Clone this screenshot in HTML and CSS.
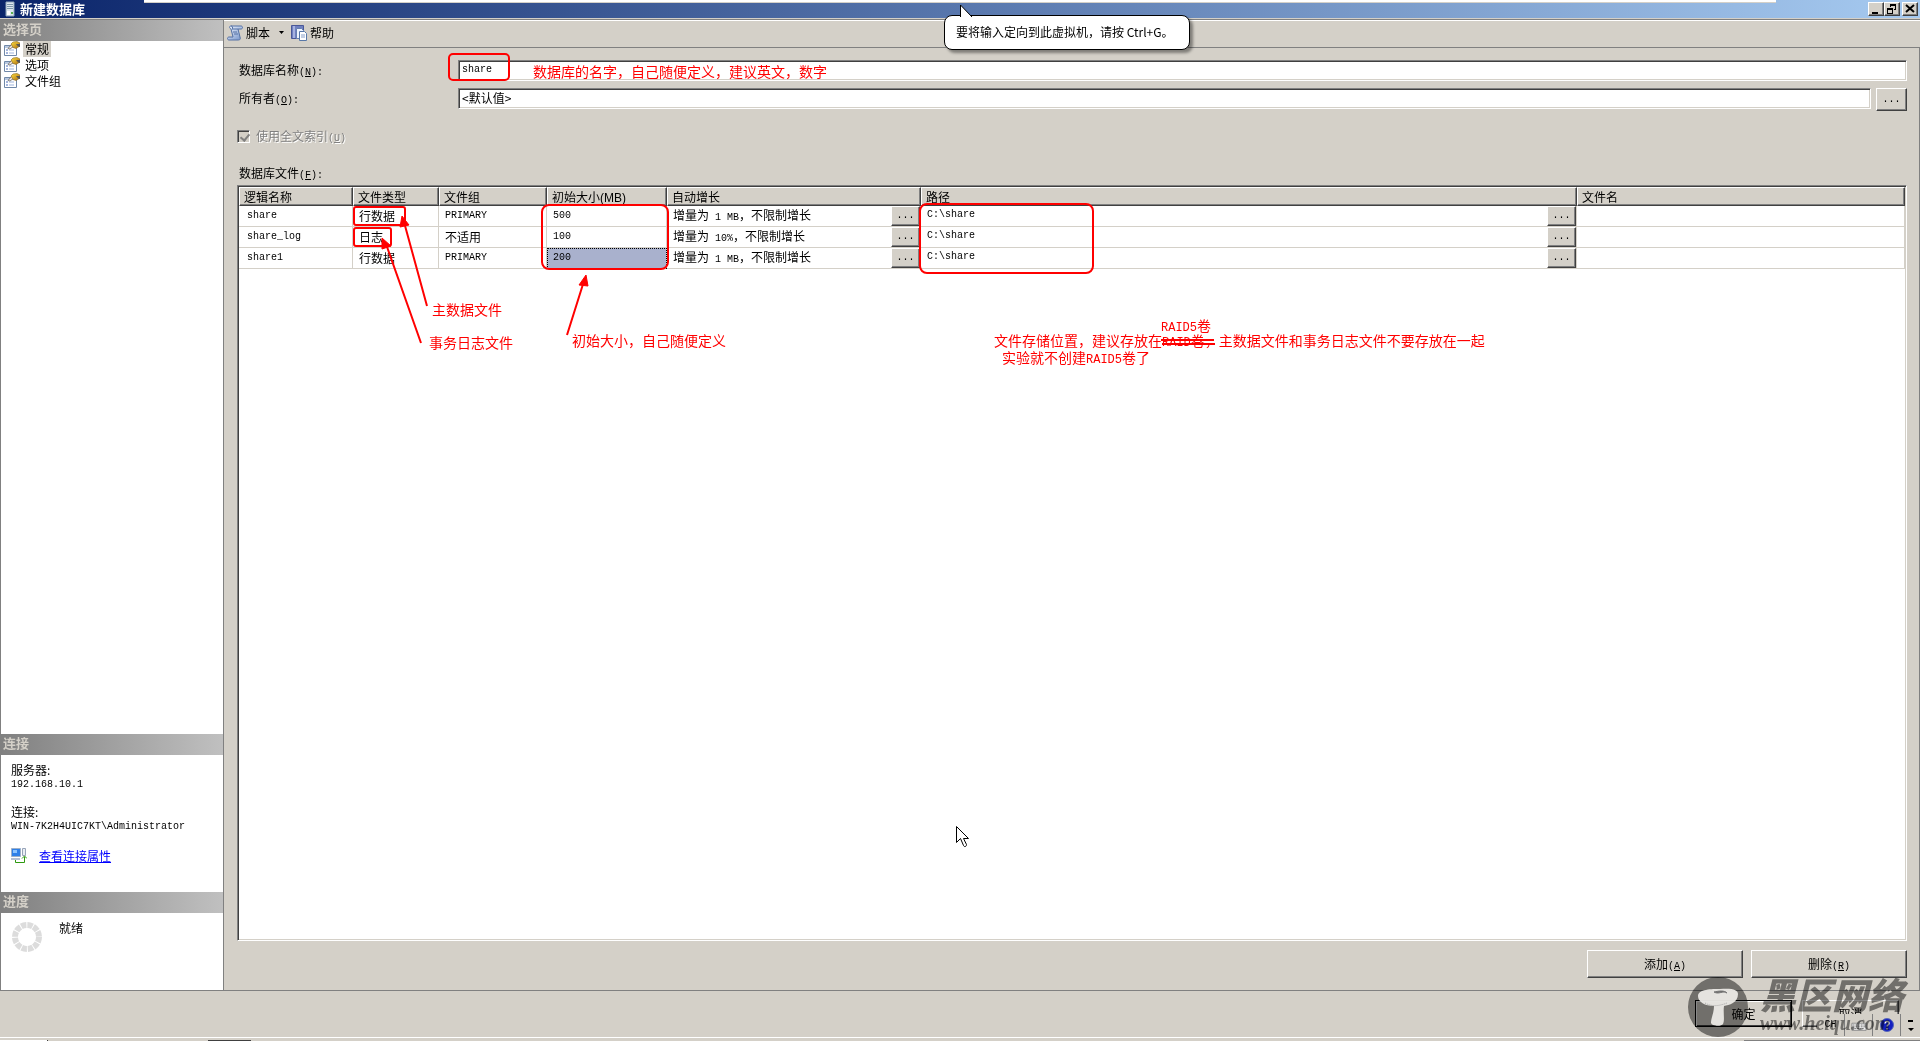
FILE: index.html
```html
<!DOCTYPE html>
<html lang="zh-CN">
<head>
<meta charset="utf-8">
<title>新建数据库</title>
<link rel="stylesheet" href="styles.css">
</head>
<body>
<svg class="defs" aria-hidden="true">
  <defs>
    <linearGradient id="blue" x1="0" y1="0" x2="1" y2="1"><stop offset="0" stop-color="#f4f8ff"/><stop offset="1" stop-color="#6f8fc8"/></linearGradient>
    <linearGradient id="gold" x1="0" y1="0" x2="1" y2="1"><stop offset="0" stop-color="#ffe040"/><stop offset="1" stop-color="#a86a10"/></linearGradient>
    <symbol id="page-icon" viewBox="0 0 16 16">
      <path d="M.5 4.500h12v10H.5z" fill="#fff" stroke="#7088a8"/>
      <path d="M1 5h11v2H1z" fill="#b8c8e0"/>
      <path d="M2 9h2M2 12h2" stroke="#4a6ab8"/><path d="M5 9h5M5 12h5" stroke="#9fb4dc"/>
      <path d="M4 7.500 8 3l2 2-4 3z" fill="#f8ece0" stroke="#555" stroke-width=".7"/>
      <path d="M7 3 9 1l4-.5 3 1.500v3l-4 2.500-3-1z" fill="url(#gold)" stroke="#8a6820" stroke-width=".6"/>
      <path d="M12 3h4v3l-2-.5z" fill="#555"/>
    </symbol>
  </defs>
</svg>

<header class="titlebar">
  <svg class="title-icon" viewBox="0 0 10 16"><path d="M1 1h8v14H1z" fill="#dde6ee" stroke="#8ea4b8"/><path d="M2 3.500h6M2 5.500h6M2 7.500h6" stroke="#7e98ac"/><path d="M2 10h3v4H2z" fill="#fff"/><path d="M6 11h2v2H6z" fill="#58b050"/></svg>
  <h1>新建数据库</h1>
  <div class="window-buttons">
    <button class="raised" aria-label="最小化"><svg viewBox="0 0 12 10"><path d="M2 8h6v2H2z"/></svg></button>
    <button class="raised" aria-label="还原"><svg viewBox="0 0 12 10"><path d="M4 0h6v6H8V5h1V2H5v1H4zM1 4h6v6H1zm1 2v3h4V6z" fill-rule="evenodd"/></svg></button>
    <button class="raised close" aria-label="关闭"><svg viewBox="0 0 12 10"><path d="m2 1 8 7M10 1 2 8" stroke="#000" stroke-width="2"/></svg></button>
  </div>
  <div class="screen-strip"></div>
</header>

<div class="window">
  <aside class="sidebar">
    <h2>选择页</h2>
    <nav class="pages">
      <a href="#general" class="selected"><svg><use href="#page-icon"/></svg><span>常规</span></a>
      <a href="#options"><svg><use href="#page-icon"/></svg><span>选项</span></a>
      <a href="#filegroups"><svg><use href="#page-icon"/></svg><span>文件组</span></a>
    </nav>
    <h2>连接</h2>
    <section class="connection">
      <p>服务器:<br><span class="lat">192.168.10.1</span></p>
      <p>连接:<br><span class="lat">WIN-7K2H4UIC7KT\Administrator</span></p>
      <div class="connection-link">
        <svg viewBox="0 0 16 16"><path d="M.5.5h9v8h-9z" fill="#2f80e8" stroke="#9db0c8"/><path d="M2 2h4v3H2z" fill="#8cc4ff"/><path d="M0 10h9v2H0z" fill="#b4c0d4"/><path d="M11.500.5h3v7h-3z" fill="#e8edf4" stroke="#98a4b8"/><path d="M4.500 12v2.500h9V9M11 10.500 13.500 8l2.500 2.500" fill="none" stroke="#2f9a10"/></svg>
        <a href="#properties">查看连接属性</a>
      </div>
    </section>
    <h2>进度</h2>
    <section class="progress">
      <svg viewBox="0 0 30 30"><circle cx="15" cy="15" r="12" fill="none" stroke="#dcdcdc" stroke-width="6" stroke-dasharray="5.300 0.983" /></svg>
      <span>就绪</span>
    </section>
  </aside>

  <main class="content">
    <div class="toolbar">
      <button><svg viewBox="0 0 16 16"><path d="M4 1h10c2 0 2 3 0 3h-3l2 8c1 3-1 3-2 3H2c-2 0-2-3 0-3h4L4 4C2 3 2 1 4 1z" fill="url(#blue)" stroke="#5470a4"/><path d="M4 1c2 0 2 3 1 3h6M6 7h4M7 9h4" fill="none" stroke="#5470a4"/></svg>脚本</button>
      <button class="drop" aria-label="脚本选项"><svg viewBox="0 0 5 3"><path d="M0 0h5L2.500 3z"/></svg></button>
      <button><svg viewBox="0 0 16 16"><path d="M.5.5h12v13H.5z" fill="#7080c0" stroke="#4a5898"/><path d="M3 1v12" stroke="#dce4ff"/><path d="M5.500 3.500h5l2 2v8h-7z" fill="#eef4ff" stroke="#6680b0"/><path d="M8.500 6.500h5l2 2v7h-7z" fill="#fff" stroke="#5878a8"/><path d="M10 10h4M10 12h4" stroke="#88a0c8"/></svg>帮助</button>
    </div>

    <form class="form">
      <div class="field">
        <label for="name">数据库名称<span class="lat">(<u>N</u>):</span></label>
        <input id="name" class="sunken lat" type="text" value="share">
      </div>
      <div class="field owner">
        <label for="owner">所有者<span class="lat">(<u>O</u>):</span></label>
        <input id="owner" class="sunken" type="text" value="&lt;默认值&gt;">
        <button type="button" class="raised browse lat">...</button>
      </div>
      <label class="check"><input type="checkbox" checked disabled><span>使用全文索引<span class="lat">(<u>U</u>)</span></span></label>
      <p class="files-label" id="files-label">数据库文件<span class="lat">(<u>F</u>):</span></p>
      <div class="sunken grid">
        <table aria-labelledby="files-label">
          <colgroup><col class="c-name"><col class="c-type"><col class="c-group"><col class="c-size"><col class="c-growth"><col class="c-path"><col></colgroup>
          <thead>
            <tr><th>逻辑名称</th><th>文件类型</th><th>文件组</th><th>初始大小<span class="unit">(MB)</span></th><th>自动增长</th><th>路径</th><th>文件名</th></tr>
          </thead>
          <tbody>
            <tr>
              <td class="lat">share</td><td>行数据</td><td class="lat">PRIMARY</td><td class="lat">500</td>
              <td><div class="with-button"><span>增量为<span class="lat"> 1 MB</span>，不限制增长</span><button type="button" class="raised lat">...</button></div></td>
              <td class="lat"><div class="with-button"><span>C:\share</span><button type="button" class="raised lat">...</button></div></td><td></td>
            </tr>
            <tr>
              <td class="lat">share_log</td><td>日志</td><td>不适用</td><td class="lat">100</td>
              <td><div class="with-button"><span>增量为<span class="lat"> 10%</span>，不限制增长</span><button type="button" class="raised lat">...</button></div></td>
              <td class="lat"><div class="with-button"><span>C:\share</span><button type="button" class="raised lat">...</button></div></td><td></td>
            </tr>
            <tr>
              <td class="lat">share1</td><td>行数据</td><td class="lat">PRIMARY</td><td class="lat current">200</td>
              <td><div class="with-button"><span>增量为<span class="lat"> 1 MB</span>，不限制增长</span><button type="button" class="raised lat">...</button></div></td>
              <td class="lat"><div class="with-button"><span>C:\share</span><button type="button" class="raised lat">...</button></div></td><td></td>
            </tr>
          </tbody>
        </table>
      </div>
      <div class="file-actions">
        <button type="button" class="raised">添加<span class="lat">(<u>A</u>)</span></button>
        <button type="button" class="raised">删除<span class="lat">(<u>R</u>)</span></button>
      </div>
    </form>
  </main>
</div>

<footer class="footer">
  <button class="raised default">确定</button>
  <button class="raised">取消</button>
</footer>
<div class="taskbar"><span class="task-start"></span><span class="task-item"></span><span class="task-tray"></span></div>

<div class="language-bar">
  <span class="lat">CH</span>
  <span><svg viewBox="0 0 18 14"><path d="M1 5h16v8H1z" fill="#eee" stroke="#888"/><path d="M2 7h14M2 9h14M4 11h10" stroke="#777" stroke-dasharray="2 1"/><path d="M9 5c0-4 4 0 5-4" fill="none" stroke="#888"/></svg></span>
  <span><svg viewBox="0 0 14 14"><circle cx="7" cy="7" r="6.500" fill="#1420c0" stroke="#5868b8"/><path d="M5 5.500c0-3 4.500-2.500 4 0C8.800 7 7 7 7 8.500M7 10v1.500" fill="none" stroke="#fff" stroke-width="1.500"/></svg></span>
  <span class="bar-menu"><svg viewBox="0 0 6 12"><path d="M0 1h5v2H0zM0 9h6l-3 3z"/></svg></span>
</div>

<div class="watermark">
  <div class="mark">
    <span class="disc"></span>
    <svg viewBox="0 0 60 60"><path d="M10 19c0-7 14-7 22-7 13-1 18 1 18 5 0 9-9 11-14 12-1 7 1 14-1 18-2 3-11 2-12-1 0-5 3-10 3-17-9 0-16-4-16-10z" fill="#eceae6"/><path d="M26 15c5 3 9-2 13 1-3-3-8-2-13-1z" fill="#666" stroke="#777"/><path d="M17 26c7 4 14 3 22 0" fill="none" stroke="#aaa" stroke-dasharray="1 1"/></svg>
  </div>
  <div class="words"><strong>黑区网络</strong><em>www.heiqu.com</em></div>
</div>

<div class="notes">
  <svg>
    <g fill="none" stroke="#f00" stroke-width="2">
      <rect x="449" y="54" width="60" height="26" rx="4"/>
      <rect x="354" y="207" width="51" height="18" rx="2"/>
      <rect x="354" y="228" width="37" height="18" rx="2"/>
      <rect x="542" y="205" width="126" height="64" rx="7"/>
      <rect x="920" y="204" width="173" height="69" rx="7"/>
      <path d="M427 306 404 222M421 343 386 244M567 335 584 281M1161 340h53M1162 344h53"/>
    </g>
    <path d="m402 216 7 9-9 2zM382 238l9 8-9 3zM586 275l2 11-9-1z" fill="#f00" stroke="#f00"/>
    <path d="M956.500 826.500v16l4-4 3 7c1 2 3 1 3-1l-3-6h5z" fill="#fff" stroke="#000"/>
  </svg>
  <span class="n-name">数据库的名字，自己随便定义，建议英文，数字</span>
  <span class="n-data">主数据文件</span>
  <span class="n-log">事务日志文件</span>
  <span class="n-size">初始大小，自己随便定义</span>
  <span class="n-path">文件存储位置，建议存放在<i>RAID</i>卷，主数据文件和事务日志文件不要存放在一起</span>
  <span class="n-raid"><i>RAID5</i>卷</span>
  <span class="n-lab">实验就不创建<i>RAID5</i>卷了</span>
</div>

<div class="tip">要将输入定向到此虚拟机，请按 Ctrl+G。<svg viewBox="0 0 14 13"><path d="M1.500 13V1L13 13" fill="#fff" stroke="#000"/></svg></div>
</body>
</html>
```
FILE: styles.css
```css
* { box-sizing: border-box; }
html { height: 100%; }
body {
  position: relative;
  display: flex;
  flex-direction: column;
  min-height: 100%;
  margin: 0;
  overflow: hidden;
  background: #d4d0c8;
  color: #000;
  font: 12px/16px "Noto Sans CJK SC", sans-serif;
}
h1, h2, p { margin: 0; }
button, input { font: inherit; color: inherit; padding: 0; margin: 0; border-radius: 0; }
.defs { position: absolute; width: 0; height: 0; }
.lat, button.lat, input.lat { font-family: "Liberation Mono", monospace; font-size: 10px; line-height: 8px; white-space: pre; }

.raised {
  background: #d4d0c8;
  border: 1px solid;
  border-color: #fff #404040 #404040 #fff;
  box-shadow: inset -1px -1px #808080;
}
.sunken {
  background: #fff;
  border: 1px solid;
  border-color: #808080 #fff #fff #808080;
  box-shadow: inset 1px 1px #404040, inset -1px -1px #d4d0c8;
}

.titlebar {
  position: relative;
  display: flex;
  align-items: center;
  height: 18px;
  padding: 0 2px 0 5px;
  background: linear-gradient(90deg, #0a246a, #a6caf0);
  color: #fff;
}
.title-icon { width: 10px; height: 16px; }
.titlebar h1 { margin-left: 5px; font-size: 13px; line-height: 18px; }
.window-buttons { display: flex; margin-left: auto; }
.window-buttons button { display: flex; width: 16px; height: 14px; padding: 1px; }
.window-buttons svg { width: 12px; height: 10px; }
.window-buttons .close { margin-left: 2px; }
.screen-strip {
  position: absolute;
  top: 0;
  left: 144px;
  right: 144px;
  height: 3px;
  background: #fff;
  border-bottom: 1px solid #d4d0c8;
}

.window {
  display: flex;
  flex: 1;
  margin-top: 1px;
  border-top: 1px solid #808080;
  border-bottom: 1px solid #808080;
}
.sidebar {
  display: flex;
  flex-direction: column;
  width: 224px;
  background: #fff;
  border: solid #808080;
  border-width: 0 1px;
}
.sidebar h2 {
  height: 21px;
  padding-left: 2px;
  background: linear-gradient(90deg, #808080, #c0c0c0);
  color: #d4d0c8;
  font-size: 13px;
  line-height: 18px;
}
.pages { flex: 1; }
.pages a { display: flex; height: 16px; padding-left: 3px; color: #000; text-decoration: none; }
.pages svg { width: 16px; height: 16px; margin-right: 3px; }
.pages span { padding: 0 2px; }
.pages .selected span { background: #d4d0c8; }
.connection { height: 137px; padding: 9px 10px 0; line-height: 12px; }
.connection p { height: 24px; margin-bottom: 18px; }
.connection-link { display: flex; align-items: center; gap: 12px; }
.connection-link svg { width: 16px; height: 16px; }
.connection-link a { color: #00f; line-height: 16px; }
.progress { display: flex; gap: 17px; height: 77px; padding: 9px 11px; line-height: 12px; }
.progress svg { width: 30px; height: 30px; }

.content { display: flex; flex: 1; flex-direction: column; border-top: 1px solid #fff; }
.toolbar {
  display: flex;
  align-items: center;
  height: 27px;
  padding: 0 3px 3px;
  border-bottom: 1px solid #808080;
}
.toolbar button { display: flex; align-items: center; gap: 3px; background: none; border: 0; }
.toolbar svg { width: 16px; height: 16px; }
.toolbar .drop { padding: 0 7px 0 9px; }
.toolbar .drop svg { width: 5px; height: 3px; }
.form {
  display: flex;
  flex: 1;
  flex-direction: column;
  padding: 12px 12px 12px 13px;
  border-right: 1px solid #808080;
}
.field { display: flex; height: 21px; margin-bottom: 7px; }
.field label { width: 221px; padding: 2px 0 0 2px; }
.field .sunken { flex: 1; height: 21px; padding: 0 4px 3px 3px; outline: 0; }
.field .browse { width: 31px; height: 23px; margin-left: 5px; }
.field.owner { height: 23px; margin-bottom: 17px; }
.check { display: flex; align-items: center; gap: 6px; height: 16px; color: #808080; text-shadow: 1px 1px #fff; }
.check input {
  appearance: none;
  width: 13px;
  height: 13px;
  border: 1px solid;
  border-color: #808080 #fff #fff #808080;
  box-shadow: inset 1px 1px #404040;
}
.check input:checked::before { content: ""; display: block; width: 4px; height: 7px; margin: 1px 0 0 4px; border: solid #808080; border-width: 0 2px 2px 0; rotate: 40deg; }
.files-label { height: 16px; margin: 21px 0 4px 2px; }
.grid { flex: 1; padding: 1px; }

table { width: 100%; border-collapse: separate; border-spacing: 0; table-layout: fixed; }
.c-name { width: 114px; }
.c-type { width: 86px; }
.c-group { width: 108px; }
.c-size { width: 120px; }
.c-growth { width: 254px; }
.c-path { width: 656px; }
th {
  height: 19px;
  padding: 0 4px;
  background: #d4d0c8;
  border: 1px solid;
  border-color: #fff #404040 #404040 #fff;
  box-shadow: inset -1px -1px #808080;
  font-weight: 400;
  line-height: 16px;
  text-align: left;
}
.unit { font-family: "Liberation Sans", sans-serif; line-height: 12px; }
td, td.lat { height: 21px; padding: 0 0 0 6px; border: solid #d4d0c8; border-width: 0 1px 1px 0; line-height: 18px; }
td:first-child { padding-left: 8px; }
td.current { background: #a9b1cd; outline: 1px dotted #000; outline-offset: -1px; }
.with-button { display: flex; justify-content: space-between; height: 20px; }
.with-button button { width: 29px; }

.file-actions { display: flex; justify-content: flex-end; gap: 8px; margin-top: 9px; }
.file-actions button { width: 156px; height: 28px; }
.footer { display: flex; justify-content: flex-end; gap: 10px; height: 46px; padding: 9px 21px 10px; }
.footer button { width: 97px; }
.footer .default { border-color: #000; box-shadow: inset 1px 1px #fff, inset -1px -1px #404040; }
.taskbar { display: flex; align-items: flex-end; height: 4px; border-top: 1px solid #fff; }
.taskbar span { height: 1px; }
.task-start { width: 48px; background: #fff; border-right: 1px solid #404040; }
.task-item { width: 43px; margin-left: 160px; background: #404040; }
.task-tray { width: 176px; margin-left: auto; background: #808080; }

.language-bar {
  position: absolute;
  right: 0;
  bottom: 5px;
  display: flex;
  height: 22px;
  background: #d4d0c8;
}
.language-bar span { display: flex; align-items: center; justify-content: center; width: 28px; border-right: 1px solid #808080; }
.language-bar svg { width: 16px; height: 14px; }
.language-bar .bar-menu { width: 19px; border: 0; }
.language-bar .bar-menu svg { width: 6px; height: 12px; }

.watermark { position: absolute; right: 16px; bottom: 4px; display: flex; gap: 12px; color: #888; pointer-events: none; }
.mark { display: grid; width: 60px; height: 60px; margin-top: 4px; }
.mark > * { grid-area: 1 / 1; }
.disc { background: #888; border-radius: 50%; mix-blend-mode: multiply; }
.mark svg { width: 60px; height: 60px; opacity: .95; }
.words { display: flex; flex-direction: column; width: 144px; white-space: nowrap; mix-blend-mode: multiply; }
.words strong { font-size: 36px; font-style: italic; font-weight: 900; line-height: 40px; }
.words em { font: italic 700 20px/20px "Liberation Serif", serif; }

.notes { position: absolute; inset: 0; color: #f00; font-size: 14px; line-height: 16px; white-space: nowrap; pointer-events: none; }
.notes svg { width: 100%; height: 100%; }
.notes span { position: absolute; }
.notes i { font: 12px/12px "Liberation Mono", monospace; }
.n-name { left: 533px; top: 63px; }
.n-data { left: 432px; top: 301px; }
.n-log { left: 429px; top: 334px; }
.n-size { left: 572px; top: 332px; }
.n-path { left: 994px; top: 332px; }
.n-raid { left: 1161px; top: 317px; }
.n-lab { left: 1002px; top: 349px; }

.tip {
  position: absolute;
  top: 15px;
  left: 944px;
  width: 246px;
  padding: 8px 11px 9px;
  background: #fff;
  border: 1px solid #000;
  border-radius: 8px;
  box-shadow: 3px 3px 3px #0006;
  white-space: nowrap;
}
.tip svg { position: absolute; left: 14px; top: -12px; width: 14px; height: 13px; }
```
